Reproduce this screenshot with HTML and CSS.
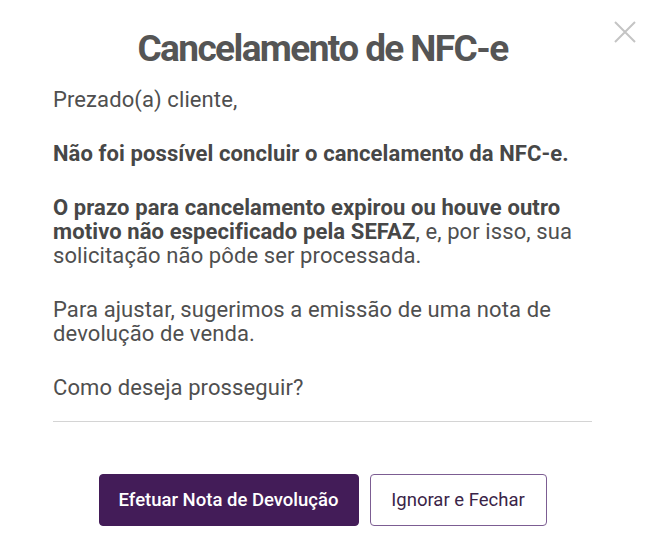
FILE: index.html
```html
<!DOCTYPE html>
<html lang="pt-BR">
<head>
<meta charset="utf-8">
<link rel="stylesheet" href="styles.css">
</head>
<body>
<div class="modal">
  <button class="close" aria-label="Fechar">
    <svg width="22" height="22" viewBox="0 0 22 22"><path d="M1 1L21 21M21 1L1 21" stroke="#c4c4c4" stroke-width="2" fill="none"/></svg>
  </button>
  <h1 class="title">Cancelamento de NFC-e</h1>
  <div class="content">
    <p>Prezado(a) cliente,</p>
    <p><strong>Não foi possível concluir o cancelamento da NFC-e.</strong></p>
    <p><strong>O prazo para cancelamento expirou ou houve outro motivo não especificado pela SEFAZ</strong>, e, por isso, sua solicitação não pôde ser processada.</p>
    <p>Para ajustar, sugerimos a emissão de uma nota de devolução de venda.</p>
    <p>Como deseja prosseguir?</p>
  </div>
  <hr class="divider">
  <div class="actions">
    <button class="btn btn-primary">Efetuar Nota de Devolução</button>
    <button class="btn btn-outline">Ignorar e Fechar</button>
  </div>
</div>
</body>
</html>
```
FILE: styles.css
```css
html, body {
  margin: 0;
  padding: 0;
  background: #fff;
}
.modal {
  position: relative;
  width: 652px;
  height: 548px;
  box-sizing: border-box;
  padding: 22px 60px 0 53px;
  font-family: Roboto, "Liberation Sans", sans-serif;
  color: #4f4f4f;
}
.close {
  position: absolute;
  top: 21px;
  right: 16px;
  border: 0;
  background: none;
  padding: 0;
  width: 22px;
  height: 22px;
  cursor: pointer;
}
.close svg { display: block; }
.title {
  margin: 0;
  text-align: center;
  font-family: Roboto, "Liberation Sans", sans-serif;
  font-weight: 700;
  font-size: 37px;
  line-height: 54px;
  color: #555555;
  letter-spacing: -1.6px;
}
.content {
  margin-top: 12px;
  font-size: 22px;
  line-height: 24px;
  letter-spacing: 0.1px;
}
.content p {
  margin: 0 0 30px;
}
.content p:last-child { margin-bottom: 0; }
.content strong {
  font-weight: 700;
  color: #474747;
}
.divider {
  margin: 21px 0 0;
  border: 0;
  border-top: 1px solid #d4d4d4;
  height: 0;
}
.actions {
  display: flex;
  justify-content: center;
  gap: 11px;
  margin-top: 52px;
}
.btn {
  height: 52px;
  box-sizing: border-box;
  border-radius: 4px;
  font-family: Roboto, "Liberation Sans", sans-serif;
  font-size: 18.5px;
  font-weight: 500;
  cursor: pointer;
}
.btn-primary {
  width: 260px;
  background: #431c58;
  border: 1px solid #431c58;
  color: #fff;
}
.btn-outline {
  width: 177px;
  background: #fff;
  border: 1px solid #7c5d92;
  color: #3a2448;
  font-weight: 400;
}
```
